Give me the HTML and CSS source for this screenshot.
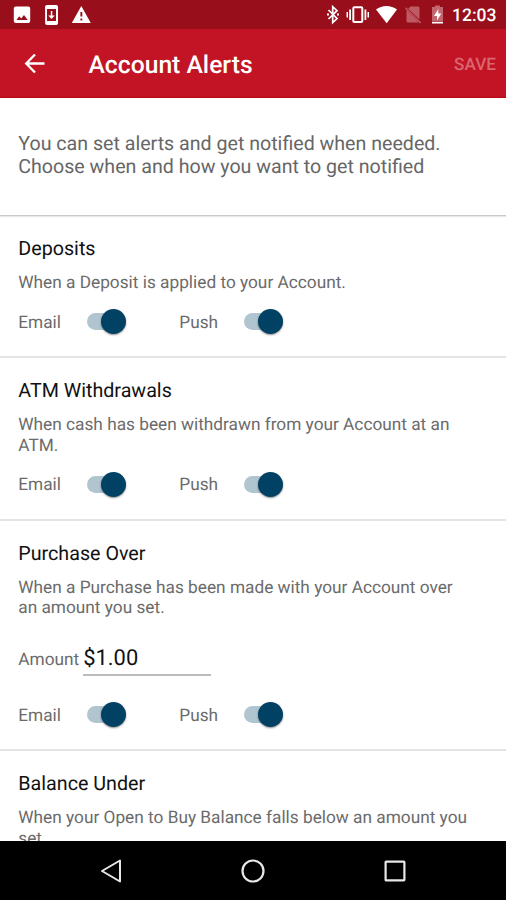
FILE: index.html
```html
<!DOCTYPE html>
<html lang="en">
<head>
<meta charset="utf-8">
<title>Account Alerts</title>
<link rel="stylesheet" href="styles.css">
</head>
<body>
<div class="screen">
  <div class="status-bar">
    <svg class="status-icons" width="100" height="29" viewBox="0 0 100 29" fill="#fff">
      <path fill-rule="evenodd" d="M15.800 6.500h12.400a2 2 0 0 1 2 2v12.400a2 2 0 0 1-2 2H15.800a2 2 0 0 1-2-2V8.500a2 2 0 0 1 2-2zM16.500 20h11.200l-3.700-5-2.800 3.600-2-2.400z"/>
      <path fill-rule="evenodd" d="M46.900 5h9.300a1.800 1.800 0 0 1 1.800 1.800v16.400a1.800 1.800 0 0 1-1.800 1.800h-9.300a1.800 1.800 0 0 1-1.800-1.800V6.800A1.800 1.800 0 0 1 46.900 5zM47 9v12h9V9zM50.800 11h1.500v4.500h2.500L51.500 19l-3.300-3.500h2.600z"/>
      <path fill-rule="evenodd" d="M81.300 6l9.500 17h-19zM80.400 12v4.500h1.900V12zM80.400 18.500v2h1.900v-2z"/>
    </svg>
    <svg class="status-icons" width="136" height="29" viewBox="0 0 136 29" fill="#fff">
      <path d="M8.500 10l8.500 8.500-4.300 4V6.700l4.300 4L8.500 19" fill="none" stroke="#fff" stroke-width="1.700"/>
      <path d="M7 13.500h2v2H7zM17 13.500h2v2h-2z"/>
      <rect x="33.300" y="7.300" width="9" height="14.800" rx="1" fill="none" stroke="#fff" stroke-width="2"/>
      <path d="M29.200 9.500h1.800v10.500h-1.800zM26.500 12h1.500v5.500h-1.500zM44.500 9.500h1.800v10.500h-1.800zM47.500 12H49v5.500h-1.500z"/>
      <path d="M56 9.500c6-4.700 15-4.700 21 0L66.700 23.200z"/>
      <path fill="#bd5a63" d="M90.500 6.500H98a1.500 1.500 0 0 1 1.500 1.500v11.500L88.200 8.700zM86.500 10L99 22.500H88a1.500 1.500 0 0 1-1.500-1.500z"/>
      <path d="M85.500 7.800L100.700 23" fill="none" stroke="#bd5a63" stroke-width="1.400"/>
      <path fill="#c4666f" d="M112 7h3V5.500h5V7h3v14h-11z"/>
      <path d="M118.300 9l-4.300 7h3v4.500l4.300-7h-3zM112 21.700h11v1.800h-11z"/>
    </svg>
    <span class="clock">12:03</span>
  </div>
  <header class="toolbar">
    <svg class="back" width="22" height="22" viewBox="0 0 22 22" fill="none" stroke="#fff" stroke-width="2.300"><path d="M11 1.500L2.200 10.500L11 19.500M2.500 10.500H20.500"/></svg>
    <h1 class="title">Account Alerts</h1>
    <span class="save">SAVE</span>
  </header>
  <main class="content">
    <p class="intro">You can set alerts and get notified when needed.<br>Choose when and how you want to get notified</p>
    <section class="alert">
      <h2>Deposits</h2>
      <p>When a Deposit is applied to your Account.</p>
      <div class="channels"><span class="label">Email</span><span class="switch"></span><span class="label">Push</span><span class="switch"></span></div>
    </section>
    <section class="alert">
      <h2>ATM Withdrawals</h2>
      <p>When cash has been withdrawn from your Account at an<br>ATM.</p>
      <div class="channels"><span class="label">Email</span><span class="switch"></span><span class="label">Push</span><span class="switch"></span></div>
    </section>
    <section class="alert">
      <h2>Purchase Over</h2>
      <p>When a Purchase has been made with your Account over<br>an amount you set.</p>
      <div class="amount"><span>Amount</span><span class="field">$1.00</span></div>
      <div class="channels"><span class="label">Email</span><span class="switch"></span><span class="label">Push</span><span class="switch"></span></div>
    </section>
    <section class="alert">
      <h2>Balance Under</h2>
      <p>When your Open to Buy Balance falls below an amount you<br>set.</p>
    </section>
  </main>
  <nav class="nav-bar">
    <svg width="22" height="24" viewBox="0 0 22 24" fill="none" stroke="#e8e8e8" stroke-width="2" stroke-linejoin="round"><path d="M20 1.500v21L2 12z"/></svg>
    <svg width="24" height="24" viewBox="0 0 24 24" fill="none" stroke="#e8e8e8" stroke-width="2.200"><circle cx="12" cy="12" r="10.500"/></svg>
    <svg width="22" height="22" viewBox="0 0 22 22" fill="none" stroke="#e8e8e8" stroke-width="2.200"><rect x="1.600" y="1.600" width="18.800" height="18.800" rx=".6"/></svg>
  </nav>
</div>
</body>
</html>
```
FILE: styles.css
```css
* { box-sizing: border-box; }
body, h1, h2, p { margin: 0; font-weight: 400; }
body { font-family: Roboto, sans-serif; background: #fff; text-rendering: geometricPrecision; }
.screen { display: flex; flex-direction: column; width: 506px; height: 900px; overflow: hidden; }
.status-bar { display: flex; flex: none; justify-content: space-between; height: 29px; background: #980f1b; }
.status-icons:nth-child(2) { margin-left: auto; }
.clock { width: 50px; margin: 0 4px 0 -4px; color: #fff; font-size: 17.500px; font-weight: 500; line-height: 32px; }
.toolbar { display: flex; flex: none; align-items: center; height: 69px; padding: 2px 10px 0 24px; background: #c21424; border-bottom: 1px solid #b90812; }
.title { margin-left: 42.500px; color: #fff; font-size: 24.700px; font-weight: 500; line-height: 30px; padding-top: 4px; }
.save { margin-left: auto; padding-top: 2px; color: #da6670; font-size: 17.200px; font-weight: 500; }
.content { flex: 1; min-height: 0; overflow: hidden; }
.intro { height: 118px; padding: 34px 18.300px 0; border-bottom: 1px solid #c8c9ca; box-shadow: 0 1px 1px #e8e8e8; color: #666; font-size: 19.620px; line-height: 23px; }
.alert { padding: 21.300px 18.300px 24.500px; border-bottom: 2px solid #e4e4e4; }
.alert h2 { color: #111; font-size: 19.700px; line-height: 23px; }
.alert p { margin-top: 12.700px; color: #6b6b6b; font-size: 17.250px; line-height: 20.500px; }
.channels { display: flex; align-items: center; height: 20px; margin-top: 18.200px; color: #6b6b6b; font-size: 17.250px; }
.label { width: 69px; padding-top: 2px; }
.label:nth-of-type(3) { width: 65px; margin-left: 53px; }
.switch { display: flex; align-items: center; justify-content: flex-end; width: 39px; height: 17px; background: linear-gradient(#b0c5cf, #b0c5cf) 0 0 / 30px 17px no-repeat; border-radius: 9px; }
.switch::after { content: ""; width: 25px; height: 25px; flex: none; border-radius: 50%; background: #014164; box-shadow: 0 1px 2px rgba(0, 0, 0, .45); }
.amount { display: flex; align-items: baseline; gap: 4px; margin-top: 27px; color: #6b6b6b; font-size: 17.250px; line-height: 26px; }
.field { width: 127.500px; height: 30.600px; border-bottom: 2px solid #bcbcbc; color: #111; font-size: 21.900px; }
.amount + .channels { margin-top: 28.100px; }
.nav-bar { display: flex; flex: none; align-items: center; justify-content: space-between; height: 59px; padding: 0 100px 0 100px; background: #000; }
```
